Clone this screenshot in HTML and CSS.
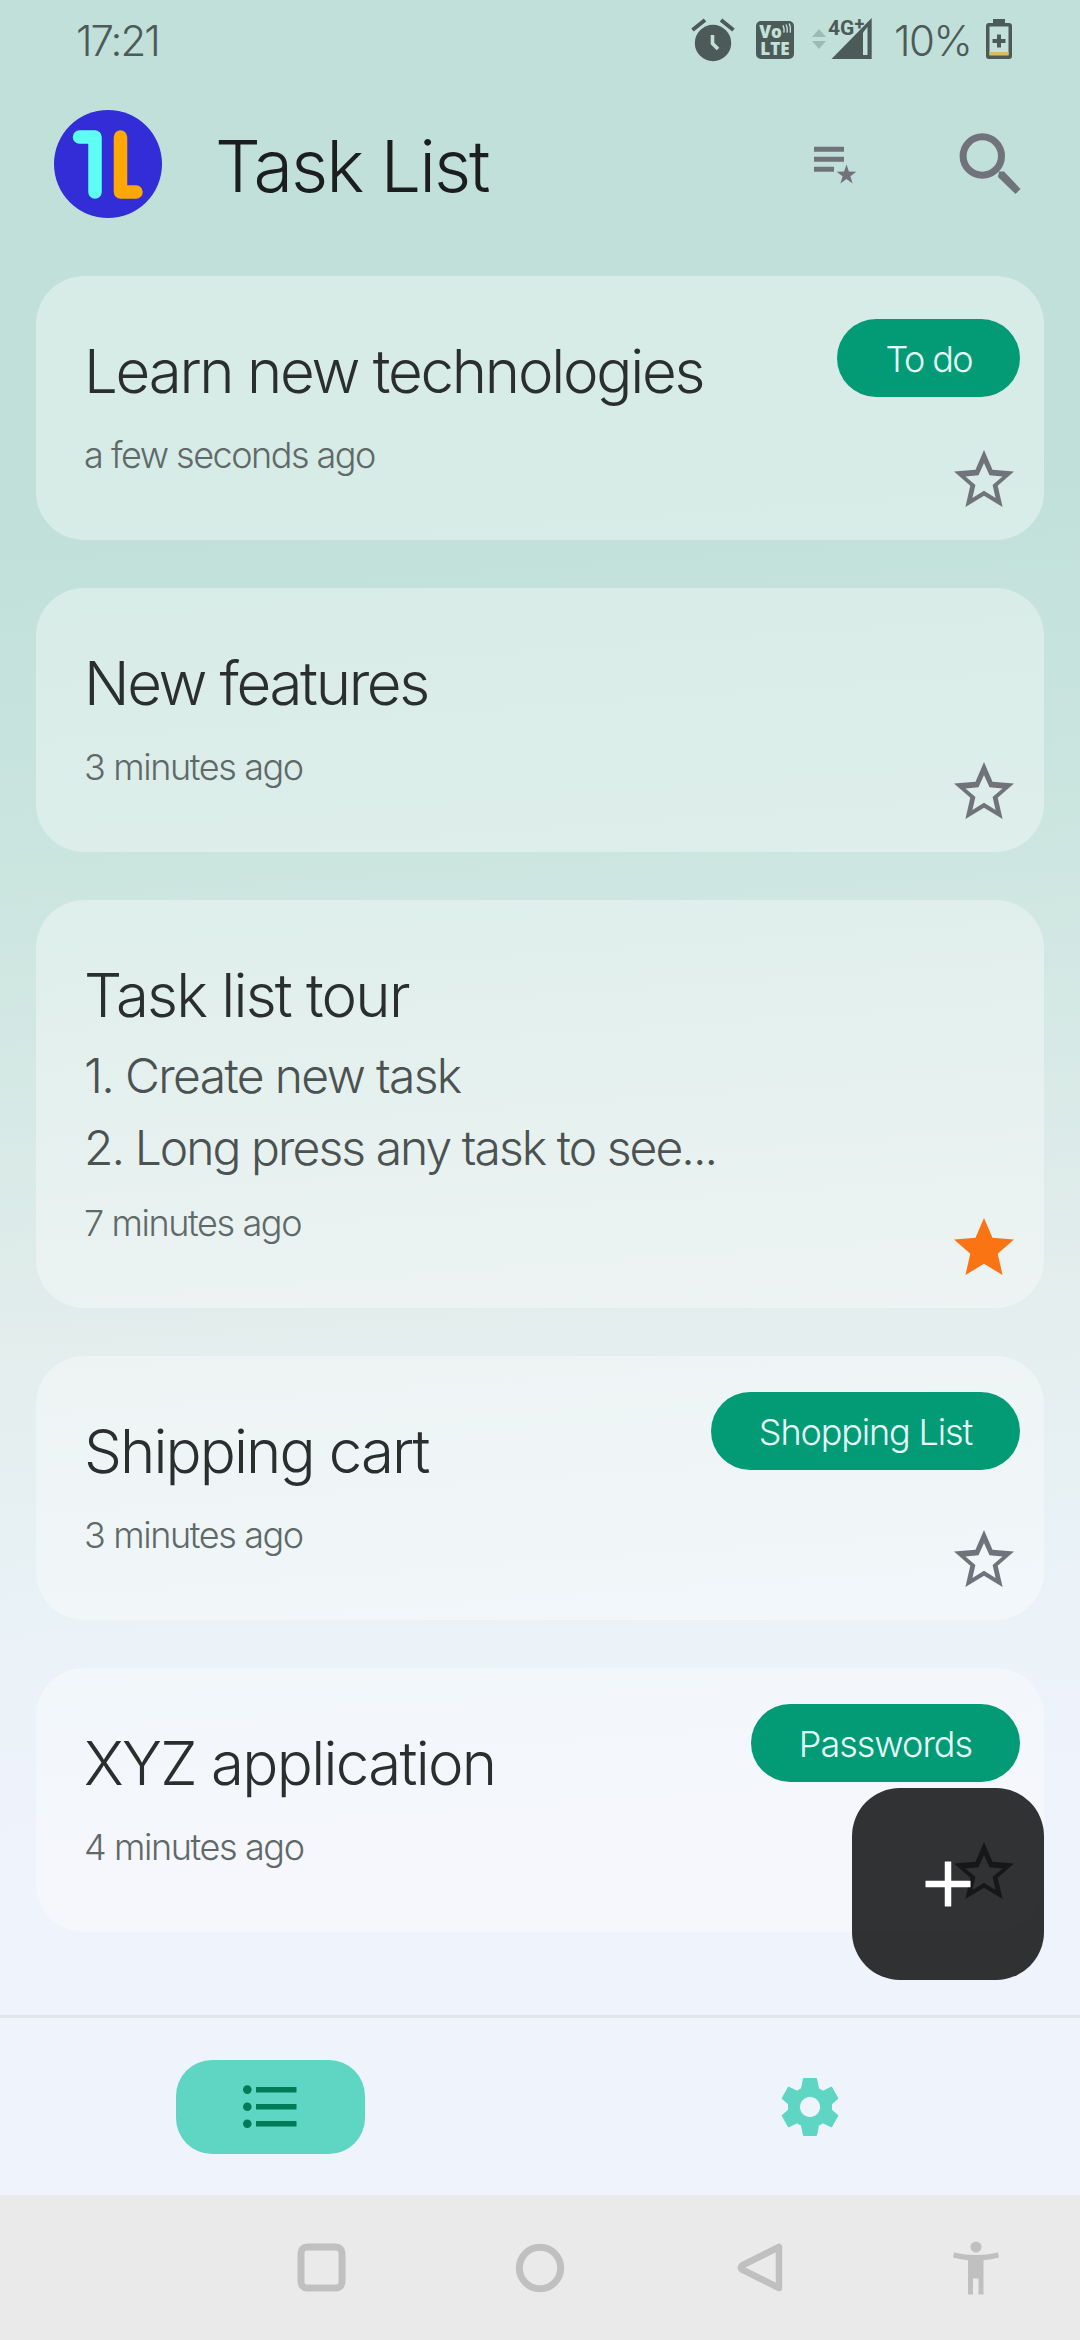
FILE: index.html
```html
<!DOCTYPE html>
<html lang="en">
<head>
<meta charset="utf-8">
<title>Task List</title>
<link rel="stylesheet" href="styles.css">
</head>
<body>
<div class="screen">
  <header class="status">
    <span class="clock">17:21</span>
    <div class="status-icons">
      <svg class="alarm" width="44" height="44" viewBox="0 0 44 44"><circle cx="22" cy="25" r="18.2" fill="#4d5b58"/><path d="M1.500 12L14 2M42.500 12L30 2" stroke="#4d5b58" stroke-width="4"/><path d="M21.500 17v8.500l5.500 5.500" fill="none" stroke="#c2e1da" stroke-width="3.600"/></svg>
      <div class="volte"><span>Vo<svg class="waves" width="9" height="12" viewBox="0 0 10 12"><path d="M1 2q2 4 1 8M4.500 1q2 4 1 9M8 0q2 5 1 10" fill="none" stroke="#c2e1da" stroke-width="1.500"/></svg></span><span>LTE</span></div>
      <div class="signal">
        <svg width="62" height="42" viewBox="0 0 62 42"><path d="M1 19L8 11l7 8zM1 23h14l-7 8z" fill="#9dbab3"/><path d="M20.500 41L60.700 0v41z" fill="#4d5b58"/><path d="M52 14.500l4.500-5.500v28H52z" fill="#c2e1da"/></svg>
        <span class="net">4G<sup>+</sup></span>
      </div>
      <span class="percent">10%</span>
      <svg class="battery" width="28" height="42" viewBox="0 0 28 42"><path d="M8 1h12v4h4q3 0 3 3v30q0 3-3 3H4q-3 0-3-3V8q0-3 3-3h4z" fill="#4d5b58"/><path d="M4.500 8.500h19V37h-19z" fill="#c2e1da"/><path d="M4.500 34h19v3.500h-19z" fill="#d9bd5f"/><path d="M14 16.500v13M7.500 23h13" stroke="#4d5b58" stroke-width="4"/></svg>
    </div>
  </header>
  <div class="appbar">
    <svg class="logo" width="110" height="110" viewBox="0 0 110 110"><circle cx="55" cy="55" r="54" fill="#332dd7"/><path d="M26.500 28H42v55" fill="none" stroke="#5dfff3" stroke-width="13.500" stroke-linecap="round" stroke-linejoin="round"/><path d="M67.500 28v55h15.500" fill="none" stroke="#ffa704" stroke-width="13.500" stroke-linecap="round" stroke-linejoin="round"/></svg>
    <h1>Task List</h1>
    <svg class="sort" width="44" height="38" viewBox="0 0 44 38"><path d="M1 3.200h30M1 13.200h30M1 23.200h20" stroke="#71737b" stroke-width="5"/><path d="M33.500 18.500l2.400 7.100 7.500.1-6 4.500 2.200 7.200-6.100-4.300-6.100 4.300 2.200-7.200-6-4.500 7.500-.1z" fill="#71737b"/></svg>
    <svg class="search" width="64" height="64" viewBox="0 0 64 64"><circle cx="24.300" cy="24" r="19.200" fill="none" stroke="#71737b" stroke-width="7"/><path d="M41 39.500h5L62.500 57l-5 5L40 45z" fill="#71737b"/></svg>
  </div>
  <main class="list">
    <article class="card"><div class="text"><h2 class="t1">Learn new technologies</h2><time class="d1">a few seconds ago</time></div><span class="tag low g1">To do</span><svg class="star" viewBox="0 0 60 58"><use href="#outline"/></svg></article>
    <article class="card"><div class="text"><h2 class="t2">New features</h2><time>3 minutes ago</time></div><svg class="star" viewBox="0 0 60 58"><use href="#outline"/></svg></article>
    <article class="card tall"><div class="text"><h2 class="t3">Task list tour</h2><p class="p1">1. Create new task</p><p class="p2">2. Long press any task to see...</p><time>7 minutes ago</time></div><svg class="star" viewBox="0 0 60 58"><use href="#filled"/></svg></article>
    <article class="card"><div class="text"><h2 class="t4">Shipping cart</h2><time>3 minutes ago</time></div><span class="tag g2">Shopping List</span><svg class="star" viewBox="0 0 60 58"><use href="#outline"/></svg></article>
    <article class="card"><div class="text"><h2 class="t5">XYZ application</h2><time>4 minutes ago</time></div><span class="tag g3">Passwords</span><svg class="star" viewBox="0 0 60 58"><use href="#outline"/></svg></article>
    <button class="add" aria-label="Add task"><svg width="46" height="46" viewBox="0 0 46 46"><path d="M23 .5v45M.5 23h45" stroke="#fff" stroke-width="6.500"/></svg></button>
  </main>
  <nav class="tabs">
    <div class="tab"><span class="pill"><svg width="54" height="44" viewBox="0 0 54 44"><g fill="#007b58"><circle cx="4.300" cy="4.600" r="4.300"/><circle cx="4.300" cy="21.700" r="4.300"/><circle cx="4.300" cy="38.800" r="4.300"/><path d="M13 2h40.500v5.500H13zM13 19h40.500v5.500H13zM13 36h40.500v5.500H13z"/></g></svg></span></div>
    <div class="tab"><svg width="58" height="58" viewBox="-29 -29 58 58"><path fill="#5fd5c4" stroke="#5fd5c4" stroke-linejoin="round" fill-rule="evenodd" d="M-6.500-28.500h13L8.500-18.500 13-15.800 21.500-20 28-8.500 21.500-3v6L28 8.500 21.500 20 13 15.800 8.500 18.500 6.500 28.500h-13L-8.500 18.500-13 15.800-21.500 20-28 8.500-21.500 3v-6L-28-8.500-21.500-20-13-15.800-8.500-18.500zM0-10.500a10.500 10.500 0 1 0 .01 0z"/></svg></div>
  </nav>
  <footer class="system">
    <svg width="50" height="50" viewBox="0 0 50 50"><rect x="4" y="4" width="41" height="41" rx="6" fill="none" stroke="#c0c0c0" stroke-width="7"/></svg>
    <svg width="50" height="50" viewBox="0 0 50 50"><circle cx="25" cy="25" r="20.700" fill="none" stroke="#c0c0c0" stroke-width="7"/></svg>
    <svg width="50" height="50" viewBox="0 0 50 50"><path d="M46 4v41L9 26.500q-2.500-2 0-4z" fill="none" stroke="#c0c0c0" stroke-width="6.500" stroke-linejoin="round"/></svg>
    <svg width="50" height="54" viewBox="0 0 50 54"><circle cx="25" cy="6" r="5.500" fill="#c0c0c0"/><path d="M3 11.500q22 5 44 0l1 5q-8 2-15.500 2.800V53.500h-5V37.500h-5.500v16h-5V19.300Q10 18.500 2 16.500z" fill="#c0c0c0"/></svg>
  </footer>
</div>
<svg class="defs" width="0" height="0"><defs>
  <path id="outline" fill="#71737b" fill-rule="evenodd" d="M30 0l8.500 19.800L60 21.600 43.700 35.800l4.900 21.300L30 45.700 11.400 57.100l4.900-21.300L0 21.600l21.500-1.800zM30 13l-5.500 12.300-13 1.100 9.900 8.700-3 13L30 40.700l11.600 7.400-3-13 9.900-8.700-13-1.100z"/>
  <path id="filled" fill="#fa7413" d="M30 0l8.500 19.800L60 21.600 43.700 35.800l4.900 21.300L30 45.700 11.400 57.100l4.900-21.300L0 21.600l21.500-1.800z"/>
</defs></svg>
</body>
</html>
```

FILE: styles.css
```css
* { box-sizing: border-box; margin: 0; padding: 0; }
body { width: 1080px; height: 2340px; overflow: hidden; font-family: Inter, "Liberation Sans", sans-serif; font-weight: 300; }
svg { display: block; flex: none; }
.defs { position: absolute; }
.screen { width: 1080px; height: 2340px; display: flex; flex-direction: column; background: linear-gradient(176deg, #c1e0da 0, #c1e0da 520px, #cbe5df 880px, #e2edec 1340px, #e9f2f6 1620px, #eff3fc 1850px, #eff3fc 100%); }
.status { height: 82px; display: flex; justify-content: space-between; padding: 0 67px 0 76px; color: #4d5b58; }
.clock { font-size: 42px; line-height: 82px; letter-spacing: -2px; }
.status-icons { display: flex; align-items: flex-start; padding-top: 18px; }
.volte { width: 38px; height: 38px; margin: 3px 0 0 21px; padding-top: 2px; background: #4d5b58; border-radius: 5px; color: #c2e1da; font: 800 17px/17px "Open Sans", sans-serif; text-align: center; }
.volte span { display: flex; justify-content: center; }
.signal { position: relative; width: 62px; margin-left: 17px; }
.net { position: absolute; left: 17px; top: -1px; font: 700 21px/22px Roboto, sans-serif; white-space: nowrap; }
.net sup { font-size: 18px; line-height: 0; vertical-align: 5px; }
.percent { width: 80px; margin-left: 21px; font-size: 42px; line-height: 46px; letter-spacing: -1.500px; }
.battery { margin-left: 11px; }
.appbar { height: 164px; display: flex; align-items: center; padding: 0 57px 0 53px; }
h1 { width: 300px; margin: 3px 0 0 52px; font-size: 72px; font-weight: 300; line-height: 90px; letter-spacing: -2px; white-space: nowrap; color: #1c1e1e; }
.sort { margin: 2px 0 0 298px; }
.search { margin-left: 101px; }
.list { position: relative; height: 1769px; padding: 30px 36px 0; display: flex; flex-direction: column; gap: 48px; }
.card { position: relative; height: 264px; flex: none; border-radius: 48px; background: rgba(255,255,255,.36); }
.card.tall { height: 408px; }
.text { display: flex; flex-direction: column; padding: 59px 0 0 48px; white-space: nowrap; }
h2 { font-size: 60px; font-weight: 300; line-height: 72px; color: #2a2f2e; }
.t1 { letter-spacing: -2.250px; }
.t2 { letter-spacing: -2.350px; }
.t3 { letter-spacing: -1.800px; }
.t4 { letter-spacing: -1.900px; }
.t5 { letter-spacing: -1.700px; }
p { font-size: 48px; line-height: 72px; color: #4b5251; }
.p1 { letter-spacing: -1.650px; }
.p2 { letter-spacing: -1.950px; }
.tall h2 { margin-bottom: 9px; }
time { margin-top: 24px; font-size: 36px; line-height: 48px; letter-spacing: -1.400px; color: #5f6968; }
.d1 { letter-spacing: -1.500px; }
.tall time { margin-top: 15px; }
.tag { position: absolute; right: 24px; top: 36px; height: 78px; padding: 0 48px; border-radius: 39px; background: #029b76; color: #e9fffa; font-size: 36px; line-height: 80px; white-space: nowrap; }
.tag.low { top: 43px; }
.g1 { letter-spacing: -1.600px; }
.g2 { letter-spacing: -1.150px; }
.g3 { letter-spacing: -1px; }
.star { position: absolute; right: 30px; bottom: 32px; width: 60px; height: 58px; }
.add { position: absolute; left: 852px; top: 1542px; width: 192px; height: 192px; border: 0; border-radius: 48px; background: rgba(0,0,0,.8); display: flex; align-items: center; justify-content: center; }
.tabs { height: 180px; border-top: 3px solid #e2e6ed; background: #eff3fc; display: flex; }
.tab { flex: 1; display: flex; align-items: center; justify-content: center; }
.pill { width: 189px; height: 94px; border-radius: 36px; background: #5fd5c4; display: flex; align-items: center; justify-content: center; }
.system { flex: 1; display: flex; align-items: center; background: #eaeaea; padding: 0 80px 0 297px; gap: 168px; }
.system svg:last-child { margin-left: auto; }
```
